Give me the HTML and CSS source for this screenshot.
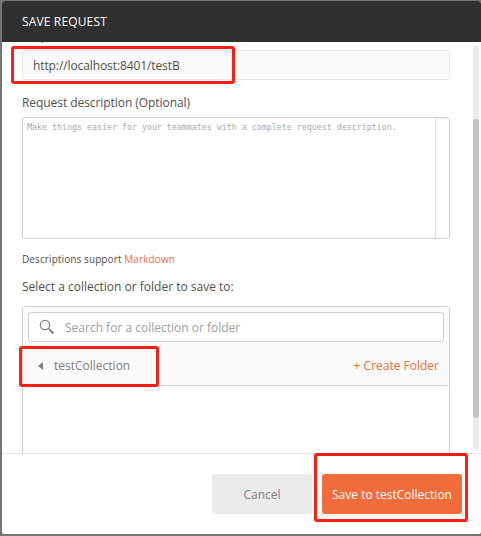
FILE: index.html
```html
<!DOCTYPE html>
<html lang="en">
<head>
<meta charset="utf-8">
<title>Save Request</title>
<link rel="stylesheet" href="styles.css">
</head>
<body>
<div class="modal">
  <header class="modal-header">SAVE REQUEST</header>
  <main class="modal-body">
    <div class="form">
      <div class="label name-label">Request name</div>
      <div class="name-input"><span class="url">http://localhost:8401/testB</span></div>
      <div class="label desc-label">Request description (Optional)</div>
      <div class="description">
        <div class="description-text">Make things easier for your teammates with a complete request description.</div>
        <div class="description-gutter"></div>
      </div>
      <div class="hint">Descriptions support <a class="link">Markdown</a></div>
      <div class="label select-label">Select a collection or folder to save to:</div>
      <div class="picker">
        <div class="picker-top">
          <div class="search">
            <svg class="search-icon" viewBox="0 0 16 16"><circle cx="6" cy="6" r="4.7"/><path d="M9.3 9.3l1.6 1.6"/><path class="handle" d="M10.6 10.6l3.9 3.9"/></svg>
            <span class="search-text">Search for a collection or folder</span>
          </div>
          <div class="crumb">
            <svg class="arrow" viewBox="0 0 5 8"><path d="M5 0v8L0 4z"/></svg>
            <span>testCollection</span>
            <a class="link create">+ Create Folder</a>
          </div>
        </div>
      </div>
    </div>
    <div class="scrollbar"><div class="thumb"></div></div>
  </main>
  <footer class="modal-footer">
    <div class="button cancel">Cancel</div>
    <div class="button save">Save to testCollection</div>
  </footer>
</div>
<div class="mark mark-url"></div>
<div class="mark mark-collection"></div>
<div class="mark mark-save"></div>
</body>
</html>
```
FILE: styles.css
```css
* { box-sizing: border-box; }
body {
  margin: 0;
  width: 481px;
  height: 536px;
  padding: 1px 0 2px 2px;
  overflow: hidden;
  position: relative;
  background: #747474;
  font: 12px/16px "Open Sans", sans-serif;
  color: #505050;
  white-space: nowrap;
}
.modal {
  height: 533px;
  display: flex;
  flex-direction: column;
  background: #fff;
  border-radius: 3px 3px 2px 2px;
  overflow: hidden;
}
.modal-header {
  height: 41px;
  flex: none;
  padding: 13px 20px 0;
  background: #303030;
  color: #fff;
  letter-spacing: 0.15px;
}
.modal-body {
  height: 411px;
  flex: none;
  display: flex;
  justify-content: space-between;
  overflow: hidden;
}
.form { width: 428px; margin-left: 20px; }
.label { height: 16px; }
.name-label { margin: -14px 0 6px; }
.name-input {
  height: 30px;
  padding: 7px 10px;
  line-height: 15px;
  border: 1px solid #e8e8e8;
  border-radius: 3px;
  background: #fafafa;
}
.url { letter-spacing: -0.1px; }
.desc-label { margin: 15px 0 6px; letter-spacing: -0.06px; }
.description {
  height: 122px;
  display: flex;
  border: 1px solid #d0d0d0;
  border-radius: 3px;
}
.description-text {
  flex: 1;
  padding: 3px 4px;
  font: 8.3px/12px "DejaVu Sans Mono", monospace;
  color: #aaa;
}
.description-gutter { width: 14px; border-left: 1px solid #e0e0e0; border-top: 1px solid #eee; }
.hint { height: 14px; margin-top: 13px; font-size: 10px; line-height: 15px; letter-spacing: 0.1px; }
.link { color: #f26b3a; }
.select-label { margin: 13px 0 11px; }
.picker {
  height: 200px;
  border: 1px solid #d0d0d0;
  border-radius: 3px;
}
.picker-top {
  height: 79px;
  padding: 5px 5px 0;
  background: #fafafa;
  border-bottom: 1px solid #d0d0d0;
  border-radius: 2px 2px 3px 3px;
}
.search {
  height: 30px;
  display: flex;
  align-items: center;
  padding-left: 10px;
  border: 1px solid #d0d0d0;
  border-radius: 3px;
  background: #fff;
  color: #a0a0a0;
}
.search-icon { width: 16px; height: 16px; margin-right: 10px; fill: none; stroke: #808080; stroke-width: 1.3; }
.search-icon .handle { stroke-width: 2; }
.search-text { padding-top: 2px; }
.crumb { height: 43px; display: flex; align-items: center; padding: 5px 5px 0 10px; color: #808080; }
.arrow { width: 5px; height: 8px; margin-right: 11px; fill: #808080; }
.create { margin-left: auto; }
.scrollbar {
  width: 6px;
  height: 405px;
  margin: 3px 2px 0 0;
  padding-top: 74px;
  border-radius: 3px;
  background: #ebebeb;
}
.thumb { height: 299px; border-radius: 3px; background: #c4c4c4; }
.modal-footer {
  flex: 1;
  display: flex;
  justify-content: flex-end;
  gap: 10px;
  padding: 20px 19px 0 0;
  border-top: 1px solid #e6e6e6;
}
.button { height: 40px; line-height: 42px; border-radius: 3px; text-align: center; }
.cancel { width: 100px; background: #ebebeb; color: #808080; }
.save { width: 140px; background: #f26b3a; color: #fff; }
.mark { position: absolute; border: 3px solid #ff1e12; border-radius: 3px; }
.mark-url { left: 11px; top: 46px; width: 224px; height: 38px; }
.mark-collection { left: 19px; top: 346px; width: 140px; height: 41px; }
.mark-save { left: 314px; top: 453px; width: 154px; height: 69px; }
```
